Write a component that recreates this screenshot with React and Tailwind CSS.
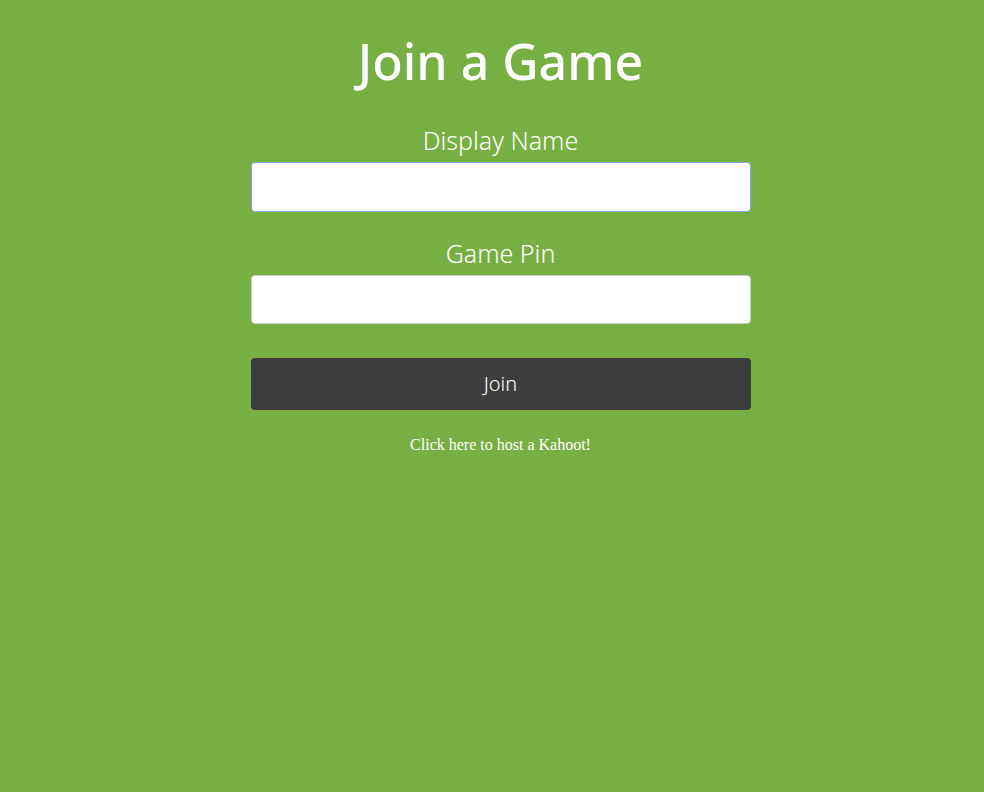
export default function App() {
  return (
    <div className="min-h-[792px] w-full bg-[#77b042] pl-[17px]" style={{ fontFamily: '"Noto Sans", sans-serif' }}>
      <div className="mx-auto flex w-[500px] flex-col items-center pt-[29px]">
        <h1 className="text-[50px] leading-[64px] font-medium text-white">Join a Game</h1>
        <label className="mt-[32px] text-[25px] leading-[30px] font-light text-white">Display Name</label>
        <input className="mt-[7px] h-[50px] w-full rounded-[4px] border border-[#80aede] bg-white px-3 outline-none" />
        <label className="mt-[26px] text-[25px] leading-[30px] font-light text-white">Game Pin</label>
        <input className="mt-[7px] h-[49px] w-full rounded-[4px] border border-[#cccccc] bg-white px-3 outline-none" />
        <button className="mt-[34px] h-[52px] w-full rounded-[4px] bg-[#3c3d3c] text-[20px] font-light text-white">Join</button>
        <p className="mt-[25px] text-[16px] leading-[20px] text-white" style={{ fontFamily: '"Liberation Serif", serif' }}>Click here to host a Kahoot!</p>
      </div>
    </div>
  );
}
